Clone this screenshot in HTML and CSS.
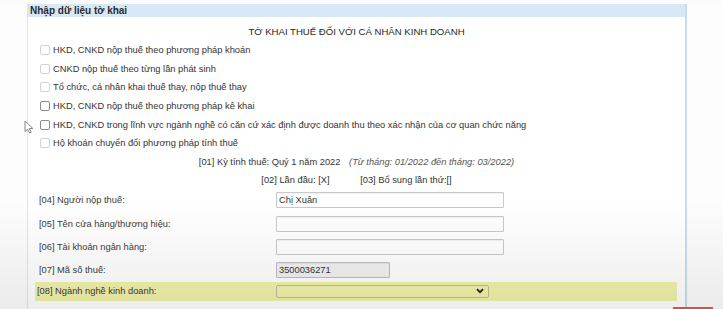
FILE: index.html
```html
<!DOCTYPE html>
<html lang="vi">
<head>
  <meta charset="UTF-8" />
  <title>Nhập dữ liệu tờ khai</title>
  <link rel="stylesheet" href="styles.css">
</head>
<body>
  <div class="page">
    <div class="gutter"></div>

    <div class="panel">
      <div class="panel-head">Nhập dữ liệu tờ khai</div>

      <div class="panel-body">
        <div class="title">TỜ KHAI THUẾ ĐỐI VỚI CÁ NHÂN KINH DOANH</div>

        <div class="checks">
          <label class="check disabled"><input type="checkbox" disabled> HKD, CNKD nộp thuế theo phương pháp khoán</label>
          <label class="check disabled"><input type="checkbox" disabled> CNKD nộp thuế theo từng lần phát sinh</label>
          <label class="check disabled"><input type="checkbox" disabled> Tổ chức, cá nhân khai thuế thay, nộp thuế thay</label>
          <label class="check"><input type="checkbox"> HKD, CNKD nộp thuế theo phương pháp kê khai</label>
          <label class="check"><input type="checkbox"> HKD, CNKD trong lĩnh vực ngành nghề có căn cứ xác định được doanh thu theo xác nhận của cơ quan chức năng</label>
          <label class="check disabled"><input type="checkbox" disabled> Hộ khoán chuyển đổi phương pháp tính thuế</label>
        </div>

        <div class="period">[01] Kỳ tính thuế: Quý 1 năm 2022 <span class="note">(Từ tháng: 01/2022 đến tháng: 03/2022)</span></div>
        <div class="period">
          <span>[02] Lần đầu: [X]</span>
          <span class="extra">[03] Bổ sung lần thứ:[]</span>
        </div>

        <div class="form">
          <div class="row">
            <div class="label">[04] Người nộp thuế:</div>
            <input class="field" type="text" value="Chị Xuân">
          </div>
          <div class="row">
            <div class="label">[05] Tên cửa hàng/thương hiệu:</div>
            <input class="field" type="text">
          </div>
          <div class="row">
            <div class="label">[06] Tài khoản ngân hàng:</div>
            <input class="field" type="text">
          </div>
          <div class="row">
            <div class="label">[07] Mã số thuế:</div>
            <input class="field short" type="text" value="3500036271" readonly>
          </div>
          <div class="row active">
            <div class="label">[08] Ngành nghề kinh doanh:</div>
            <div class="select">
              <svg width="8" height="6" viewBox="0 0 8 6"><path d="M1 1.2 L4 4.2 L7 1.2" fill="none" stroke="#222" stroke-width="1.8"/></svg>
            </div>
          </div>
        </div>
      </div>
    </div>

    <div class="side"></div>
  </div>

  <svg class="cursor" width="10" height="14" viewBox="0 0 10 14">
    <path d="M1 1 L1 11.5 L3.6 9.2 L5.6 13 L7.2 12.2 L5.3 8.6 L8.8 8.4 Z" fill="#fff" stroke="#777" stroke-width="0.9" stroke-linejoin="round"/>
  </svg>

  <div class="fade"></div>
  <div class="progress"></div>
</body>
</html>
```

FILE: styles.css
```css
* {
  box-sizing: border-box;
  margin: 0;
  padding: 0;
}

body {
  font-family: "Liberation Sans", Arial, sans-serif;
  font-size: 9.3px;
  color: #333;
  background: #fbfcfd;
  width: 723px;
  height: 309px;
  overflow: hidden;
  position: relative;
}

.page {
  display: flex;
  padding-top: 4px;
  height: 309px;
}

.gutter {
  width: 27px;
  background: #fdfdfd;
}

.panel {
  width: 660px;
  background: #fff;
  border-left: 1px solid #d6e5f3;
  border-right: 2px solid #c9dcee;
}

.side {
  flex: 1;
  background: #fdfdfd;
}

.panel-head {
  height: 13px;
  line-height: 13px;
  background: #d8e8f7;
  font-weight: bold;
  font-size: 10px;
  color: #2b2b2b;
  padding-left: 2px;
}

.panel-body {
  padding: 8px 0 0 11px;
}

.title {
  text-align: center;
  height: 14px;
  line-height: 14px;
  color: #1e1e1e;
  font-size: 9.6px;
  padding-right: 11px;
  margin-bottom: 2px;
}

.check {
  display: flex;
  align-items: center;
  height: 18.6px;
  color: #333;
}

.check input {
  appearance: none;
  width: 10px;
  height: 10px;
  border: 1px solid #8a8a8a;
  border-radius: 2px;
  background: #fff;
  margin: 0 3px 0 1px;
}

.check.disabled input {
  border-color: #d2d2d2;
}

.period {
  height: 18px;
  line-height: 18px;
  text-align: center;
  padding-right: 11px;
}

.period .note {
  font-style: italic;
  color: #555;
  margin-left: 6px;
}

.period .extra {
  margin-left: 28px;
}

.row {
  display: flex;
  align-items: center;
  height: 23.3px;
}

.label {
  width: 237px;
  color: #3a3a3a;
}

.field {
  width: 228px;
  height: 16px;
  border: 1px solid #c9c9c9;
  border-radius: 1px;
  box-shadow: inset 0 1px 1px rgba(0, 0, 0, 0.06);
  font-family: inherit;
  font-size: 9.3px;
  color: #333;
  padding: 0 2px;
  background: #fff;
  outline: none;
}

.field.short {
  width: 114px;
  background: #f1f1f1;
  border-color: #bdbdbd;
}

.row.active {
  height: 19px;
  margin-left: -4px;
  padding-left: 2px;
  margin-right: 8px;
  background: #f2f2ab;
}

.row.active .label {
  width: 239px;
}

.select {
  width: 213px;
  height: 13px;
  border: 1px solid #bdbd9c;
  border-radius: 2px;
  background: #f2f2ab;
  display: flex;
  align-items: center;
  justify-content: flex-end;
  padding-right: 4px;
}

.cursor {
  position: absolute;
  left: 24px;
  top: 120px;
}

.fade {
  position: absolute;
  left: 0;
  right: 0;
  top: 200px;
  bottom: 0;
  background: linear-gradient(to bottom, rgba(0, 0, 0, 0), rgba(0, 0, 0, 0.07));
  pointer-events: none;
}

.progress {
  position: absolute;
  left: 673px;
  width: 40px;
  bottom: 0;
  height: 2px;
  background: #f04545;
}
```
